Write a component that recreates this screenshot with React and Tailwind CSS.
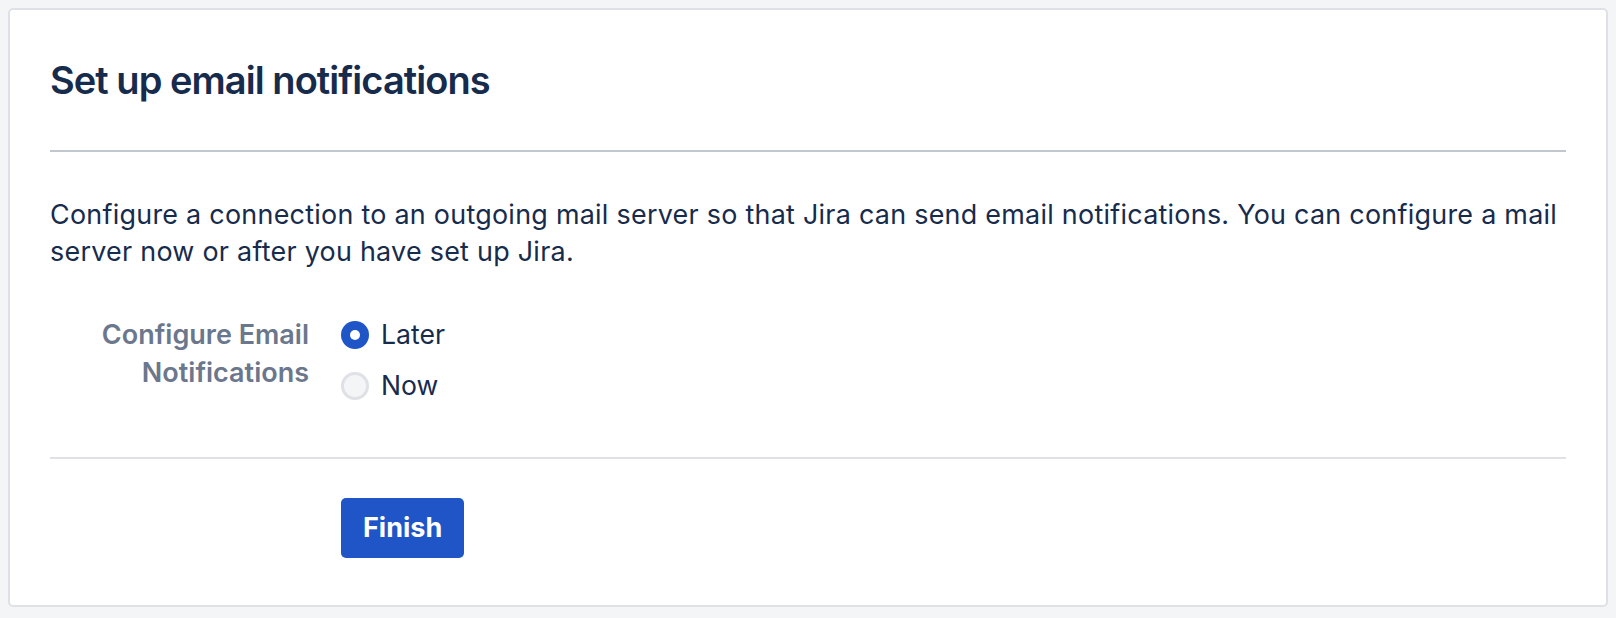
import React, { useState } from 'react';

function Radio({ checked, label, onSelect }) {
  return (
    <label className="flex h-[37px] cursor-pointer items-center gap-[12px]" onClick={onSelect}>
      {checked ? (
        <span className="flex h-[28px] w-[28px] items-center justify-center rounded-full bg-[#1f55c6]">
          <span className="h-[10px] w-[10px] rounded-full bg-white" />
        </span>
      ) : (
        <span className="h-[28px] w-[28px] rounded-full border-[3px] border-[#dfe1e6] bg-[#f4f5f7]" />
      )}
      <span className="text-[26.6px] leading-[37px] text-[#172b4d]">{label}</span>
    </label>
  );
}

export default function App() {
  const [mode, setMode] = useState('later');

  return (
    <div className="min-h-screen bg-[#f4f5f7] p-2 font-['Inter',sans-serif]">
      <div className="rounded-[5px] border-2 border-[#dfe1e6] bg-white px-10 pt-[46px] pb-[47px]">
        <h1 className="text-[38px] leading-[48px] font-semibold tracking-[-0.025em] text-[#172b4d]">
          Set up email notifications
        </h1>

        <div className="mt-[46px] h-[2px] bg-[#c1c7d0]" />

        <p className="mt-[44px] text-[26.9px] leading-[37px] tracking-[0.01em] text-[#172b4d]">
          Configure a connection to an outgoing mail server so that Jira can send email notifications. You can configure a mail server now or after you have set up Jira.
        </p>

        <div className="mt-[46px] flex gap-8">
          <div className="w-[259px] text-right text-[27px] leading-[38px] font-semibold text-[#6b778c]">
            Configure Email
            <br />
            Notifications
          </div>
          <div className="flex flex-col gap-[14px]">
            <Radio checked={mode === 'later'} label="Later" onSelect={() => setMode('later')} />
            <Radio checked={mode === 'now'} label="Now" onSelect={() => setMode('now')} />
          </div>
        </div>

        <div className="mt-[53px] h-[2px] bg-[#dfe1e6]" />

        <div className="mt-[39px] flex gap-8">
          <div className="w-[259px]" />
          <button
            type="button"
            className="h-[60px] rounded-[5px] bg-[#1f55c6] px-[22px] text-[27px] font-bold text-white"
          >
            Finish
          </button>
        </div>
      </div>
    </div>
  );
}
